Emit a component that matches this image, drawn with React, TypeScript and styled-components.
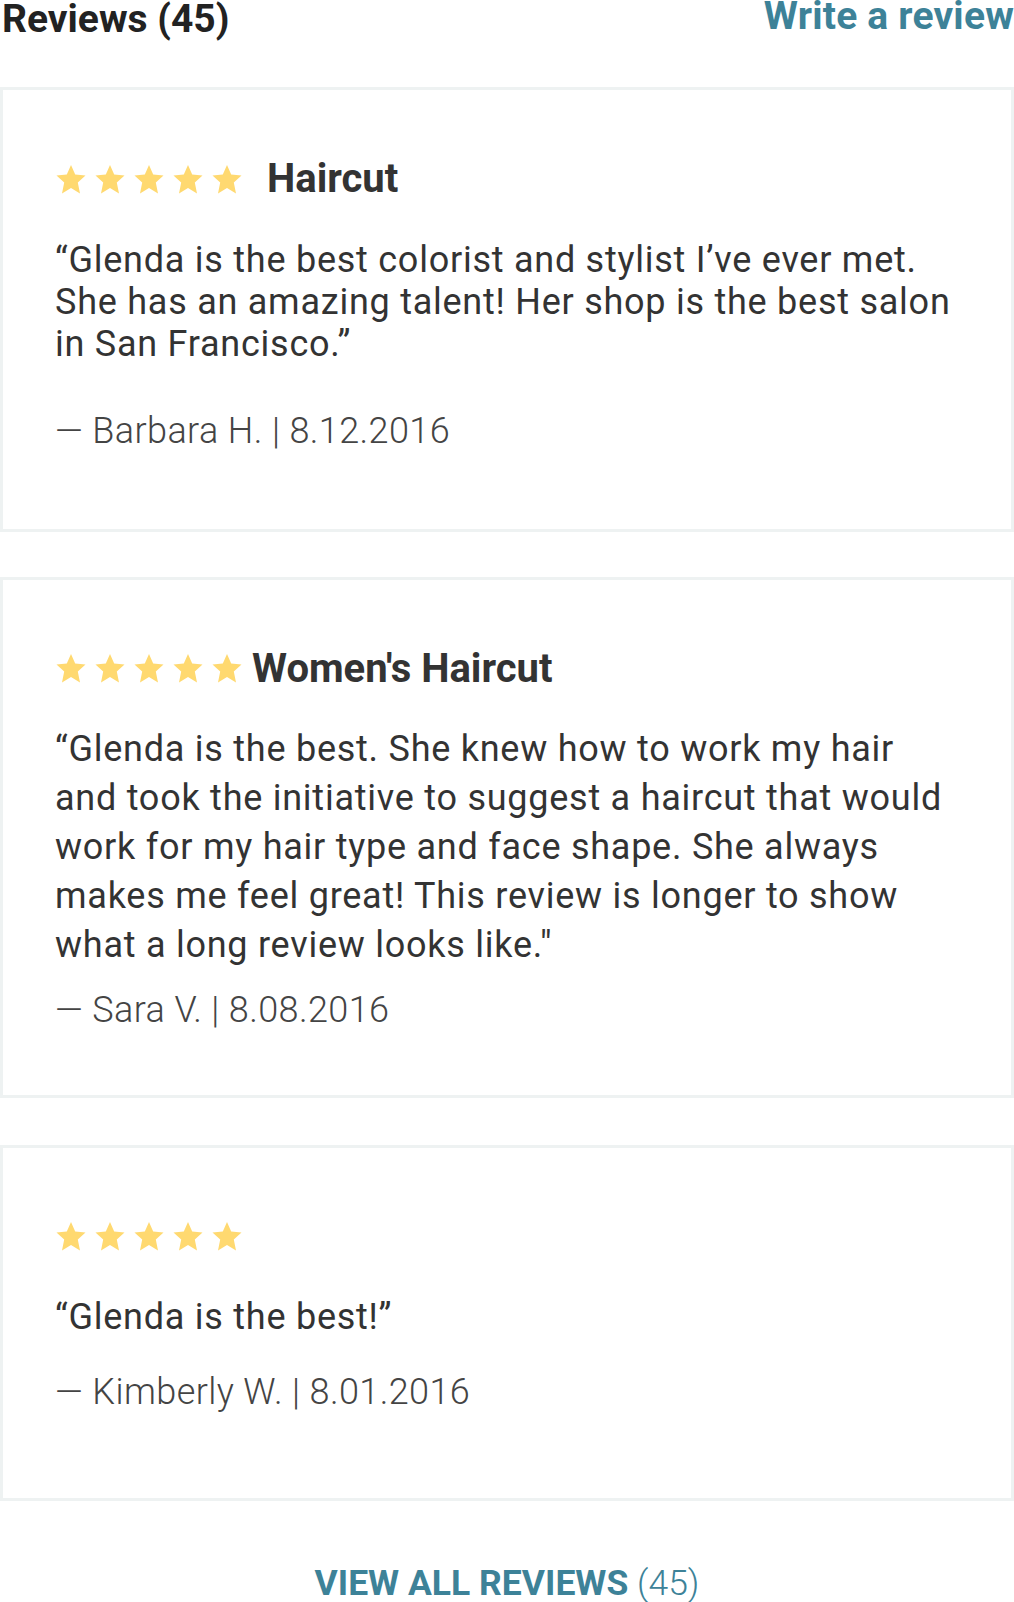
import React from "react";
import styled, { createGlobalStyle } from "styled-components";

const GlobalStyle = createGlobalStyle`
  html, body {
    margin: 0;
    padding: 0;
    background: #ffffff;
  }
  body {
    font-family: Roboto, "Liberation Sans", Arial, sans-serif;
    color: #333333;
  }
`;

const Page = styled.div`
  width: 1014px;
  display: flex;
  flex-direction: column;
`;

const Header = styled.header`
  display: flex;
  justify-content: space-between;
  align-items: flex-start;
  height: 87px;
  padding-left: 2px;
`;

const Heading = styled.h2`
  margin: 0;
  font-size: 39px;
  line-height: 38px;
  font-weight: 700;
  color: #222222;
`;

const WriteLink = styled.a`
  margin-top: -3px;
  font-size: 39px;
  line-height: 38px;
  font-weight: 700;
  letter-spacing: 0.2px;
  color: #3d8298;
  text-decoration: none;
`;

const List = styled.div`
  display: flex;
  flex-direction: column;
`;

const Card = styled.article<{ $top: number; $padBottom: number }>`
  margin-top: ${(p) => p.$top}px;
  border: 3px solid #eef2f2;
  padding: 69px 60px ${(p) => p.$padBottom}px 52px;
  display: flex;
  flex-direction: column;
`;

const TitleRow = styled.div`
  display: flex;
  align-items: center;
  height: 40px;
`;

const Stars = styled.div`
  display: flex;
  align-items: center;
  gap: 9px;
  padding-left: 1px;
`;

const Title = styled.h3<{ $gap: number }>`
  margin: 0 0 0 ${(p) => p.$gap}px;
  font-size: 40px;
  line-height: 40px;
  font-weight: 700;
  color: #333333;
`;

const Quote = styled.p<{ $lh: number }>`
  margin: ${(p) => 60.5 - p.$lh / 2}px 0 0 0;
  font-size: 36px;
  line-height: ${(p) => p.$lh}px;
  font-weight: 400;
  letter-spacing: 0.75px;
  color: #333333;
`;

const Author = styled.p<{ $gap: number }>`
  margin: ${(p) => p.$gap}px 0 0 0;
  font-size: 36px;
  line-height: 42px;
  font-weight: 300;
  letter-spacing: 0.4px;
  color: #444444;
`;

const Footer = styled.div`
  display: flex;
  justify-content: center;
  margin-top: 62px;
`;

const ViewAll = styled.a`
  font-size: 35.5px;
  line-height: 40px;
  font-weight: 700;
  text-transform: uppercase;
  color: #3d8298;
  text-decoration: none;
`;

const Count = styled.span`
  font-weight: 300;
`;

const Star = () => (
  <svg width="30" height="29" viewBox="0 0 30 29" aria-hidden="true">
    <polygon
      points="15,0 19.2,9.6 29.5,10.6 21.8,17.6 24,28.5 15,23.1 6,28.5 8.2,17.6 0.5,10.6 10.8,9.6"
      fill="#ffd970"
    />
  </svg>
);

type Review = {
  title?: string;
  titleGap: number;
  text: string;
  author: string;
  lh: number;
  authorGap: number;
  padBottom: number;
  top: number;
};

const reviews: Review[] = [
  {
    title: "Haircut",
    titleGap: 25,
    text:
      "“Glenda is the best colorist and stylist I’ve ever met. She has an amazing talent! Her shop is the best salon in San Francisco.”",
    author: "— Barbara H. | 8.12.2016",
    lh: 42,
    authorGap: 45,
    padBottom: 77,
    top: 0,
  },
  {
    title: "Women's Haircut",
    titleGap: 10,
    text:
      "“Glenda is the best. She knew how to work my hair and took the initiative to suggest a haircut that would work for my hair type and face shape. She always makes me feel great! This review is longer to show what a long review looks like.\"",
    author: "— Sara V. | 8.08.2016",
    lh: 49,
    authorGap: 19,
    padBottom: 64,
    top: 45,
  },
  {
    titleGap: 0,
    text: "“Glenda is the best!”",
    author: "— Kimberly W. | 8.01.2016",
    lh: 42,
    authorGap: 33,
    padBottom: 85,
    top: 47,
  },
];

export default function App() {
  return (
    <>
      <GlobalStyle />
      <Page>
        <Header>
          <Heading>Reviews (45)</Heading>
          <WriteLink href="#">Write a review</WriteLink>
        </Header>
        <List>
          {reviews.map((r, i) => (
            <Card key={i} $top={r.top} $padBottom={r.padBottom}>
              <TitleRow>
                <Stars>
                  {[0, 1, 2, 3, 4].map((s) => (
                    <Star key={s} />
                  ))}
                </Stars>
                {r.title && <Title $gap={r.titleGap}>{r.title}</Title>}
              </TitleRow>
              <Quote $lh={r.lh}>{r.text}</Quote>
              <Author $gap={r.authorGap}>{r.author}</Author>
            </Card>
          ))}
        </List>
        <Footer>
          <ViewAll href="#">
            View all reviews <Count>(45)</Count>
          </ViewAll>
        </Footer>
      </Page>
    </>
  );
}
